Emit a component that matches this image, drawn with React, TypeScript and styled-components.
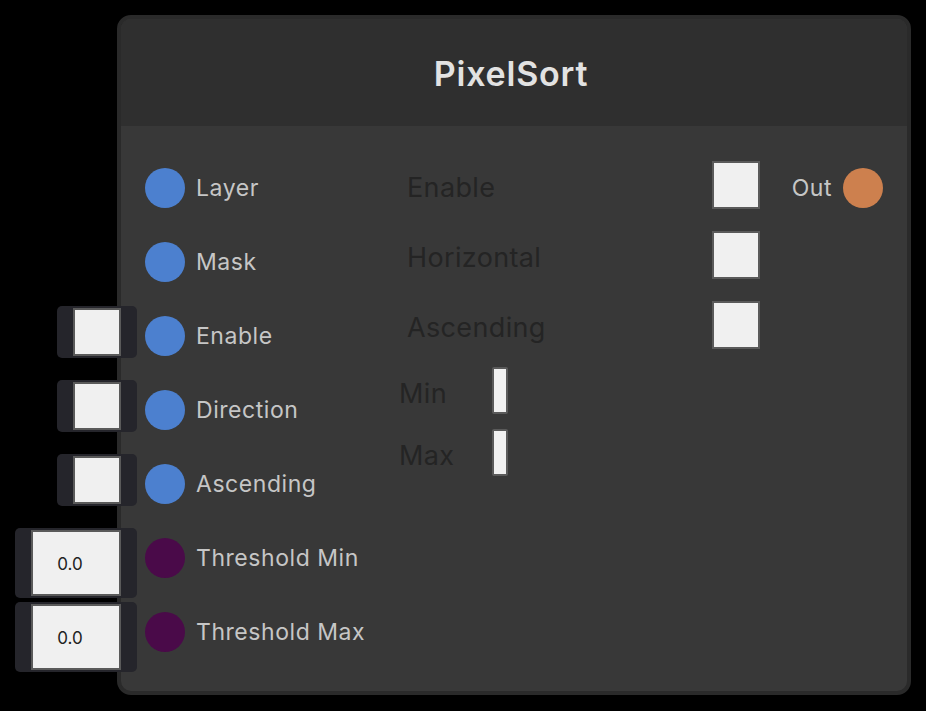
import React from 'react'
import styled, { createGlobalStyle } from 'styled-components'

type Tinput = {
  label: string,
  kind: 'data' | 'value',
  control?: 'check' | 'number',
  value?: string,
}

const inputs: Tinput[] = [
  { label: 'Layer', kind: 'data' },
  { label: 'Mask', kind: 'data' },
  { label: 'Enable', kind: 'data', control: 'check' },
  { label: 'Direction', kind: 'data', control: 'check' },
  { label: 'Ascending', kind: 'data', control: 'check' },
  { label: 'Threshold Min', kind: 'value', control: 'number', value: '0.0' },
  { label: 'Threshold Max', kind: 'value', control: 'number', value: '0.0' },
]

const settings = ['Enable', 'Horizontal', 'Ascending']
const sliders = ['Min', 'Max']

function App() {
  return (
    <>
      <GlobalStyle />
      <Canvas>
        <Node>
          <Header>PixelSort</Header>
          <Body>
            <InputsCol>
              {inputs.map((inp) => (
                <SocketRow key={inp.label}>
                  {inp.control && (
                    <ControlPad wide={inp.control === 'number'}>
                      <ControlBox>{inp.value}</ControlBox>
                    </ControlPad>
                  )}
                  <Socket color={inp.kind === 'data' ? '#4c80cf' : '#4a0a49'} />
                  <SocketLabel>{inp.label}</SocketLabel>
                </SocketRow>
              ))}
            </InputsCol>
            <MiddleCol>
              {settings.map((s) => (
                <SettingRow key={s}>
                  <SettingLabel>{s}</SettingLabel>
                  <CheckBox />
                </SettingRow>
              ))}
              <SliderList>
                {sliders.map((s) => (
                  <SliderRow key={s}>
                    <SliderLabel>{s}</SliderLabel>
                    <Thumb />
                  </SliderRow>
                ))}
              </SliderList>
            </MiddleCol>
            <OutputsCol>
              <SocketRow>
                <SocketLabel>Out</SocketLabel>
                <Socket color='#cd804e' />
              </SocketRow>
            </OutputsCol>
          </Body>
        </Node>
      </Canvas>
    </>
  )
}

const GlobalStyle = createGlobalStyle`
  html, body {
    margin: 0;
    background: #000;
  }
  body {
    font-family: Inter, "Noto Sans", sans-serif;
  }
`

const Canvas = styled.div`
  min-height: 711px;
  padding: 15px 0 0 117px;
  box-sizing: border-box;
`

const Node = styled.div`
  width: 794px;
  height: 680px;
  box-sizing: border-box;
  border: 4px solid #2a2a2a;
  border-radius: 14px;
  background: #383838;
  display: flex;
  flex-direction: column;
`

const Header = styled.div`
  height: 107px;
  background: #2f2f2f;
  border-radius: 10px 10px 0 0;
  display: flex;
  align-items: center;
  justify-content: center;
  color: #e2e2e2;
  font-size: 34px;
  font-weight: 600;
  letter-spacing: 0.8px;
  padding: 2px 6px 0 0;
  box-sizing: border-box;
`

const Body = styled.div`
  flex: 1;
  display: flex;
  align-items: flex-start;
`

const InputsCol = styled.div`
  width: 278px;
  box-sizing: border-box;
  padding: 25px 0 0 24px;
  display: flex;
  flex-direction: column;
`

const SocketRow = styled.div`
  position: relative;
  height: 74px;
  display: flex;
  align-items: center;
  gap: 11px;
`

const Socket = styled.div<{ color: string }>`
  width: 40px;
  height: 40px;
  border-radius: 50%;
  background: ${(p) => p.color};
  flex-shrink: 0;
`

const SocketLabel = styled.span`
  color: #c6c6c6;
  font-size: 23px;
  letter-spacing: 0.55px;
`

// widget pad that hangs off the left edge of the node, beside its socket
const ControlPad = styled.div<{ wide?: boolean }>`
  position: absolute;
  left: ${(p) => (p.wide ? '-130px' : '-88px')};
  top: 7px;
  width: ${(p) => (p.wide ? '122px' : '80px')};
  height: ${(p) => (p.wide ? '70px' : '52px')};
  box-sizing: border-box;
  padding: 2px 16px;
  background: #25252b;
  border-radius: 5px;
  display: flex;
`

const ControlBox = styled.div`
  flex: 1;
  box-sizing: border-box;
  border: 2px solid #5a5a5a;
  background: #f0f0f0;
  display: flex;
  align-items: center;
  justify-content: center;
  color: #222;
  font-size: 17px;
  padding: 2px 12px 0 0;
`

const MiddleCol = styled.div`
  width: 361px;
  padding-top: 24px;
  display: flex;
  flex-direction: column;
`

const SettingRow = styled.div`
  height: 70px;
  display: flex;
  align-items: center;
  justify-content: space-between;
`

const SettingLabel = styled.span`
  padding: 4px 0 0 8px;
  color: #242424;
  font-size: 27px;
  letter-spacing: 0.35px;
`

const CheckBox = styled.div`
  width: 48px;
  height: 48px;
  box-sizing: border-box;
  border: 2px solid #5a5a5a;
  background: #f0f0f0;
`

const SliderList = styled.div`
  padding-top: 7px;
  display: flex;
  flex-direction: column;
  gap: 15px;
`

const SliderRow = styled.div`
  height: 47px;
  display: flex;
  align-items: center;
`

const SliderLabel = styled.span`
  width: 93px;
  color: #242424;
  font-size: 27px;
  letter-spacing: 0.35px;
  padding-top: 6px;
`

const Thumb = styled.div`
  width: 16px;
  height: 47px;
  box-sizing: border-box;
  border: 2px solid #5a5a5a;
  border-radius: 2px;
  background: #f0f0f0;
`

const OutputsCol = styled.div`
  flex: 1;
  padding: 25px 24px 0 0;
  display: flex;
  justify-content: flex-end;
`

export default App
